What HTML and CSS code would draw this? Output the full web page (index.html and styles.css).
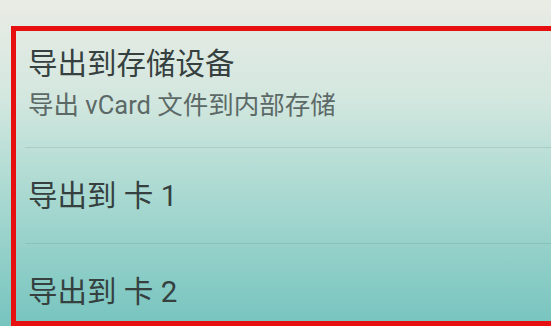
FILE: index.html
```html
<!DOCTYPE html>
<html lang="zh-CN">
<head>
  <meta charset="UTF-8">
  <meta name="viewport" content="width=device-width, initial-scale=1.0">
  <title>导出联系人</title>
  <link rel="stylesheet" href="styles.css">
</head>
<body>
  <div class="frame">
    <ul class="export-list">
      <li class="export-item first">
        <div class="item-title">导出到存储设备</div>
        <div class="item-summary">导出 vCard 文件到内部存储</div>
      </li>
      <li class="export-item">
        <div class="item-title">导出到 卡 1</div>
      </li>
      <li class="export-item">
        <div class="item-title">导出到 卡 2</div>
      </li>
    </ul>
  </div>
</body>
</html>
```

FILE: styles.css
```css
html, body {
  margin: 0;
  height: 100%;
}

body {
  background: linear-gradient(to bottom, #e9ece5 0%, #d3e7df 30%, #a9d9d1 60%, #77c4bf 100%);
  font-family: Roboto, "Noto Sans CJK SC", sans-serif;
  overflow: hidden;
  padding-top: 26px;
  box-sizing: border-box;
}

/* red highlight box, cut off by the right edge */
.frame {
  margin-left: 11px;
  height: 300px;
  box-sizing: border-box;
  border: 5px solid #e5100f;
  border-right: 0;
  overflow: hidden;
}

.export-list {
  list-style: none;
  margin: 0;
  padding: 0;
}

.export-item {
  margin-left: 9px;
  padding-left: 3px;
  height: 95px;
  border-bottom: 1px solid rgba(60, 120, 115, 0.18);
  display: flex;
  flex-direction: column;
  justify-content: center;
}

.export-item.first {
  height: 117px;
  justify-content: flex-start;
  padding-top: 14px;
  box-sizing: border-box;
}

.item-title {
  font-size: 29.5px;
  line-height: 38px;
  color: #35403f;
}

.item-summary {
  margin-top: 5px;
  font-size: 25.5px;
  line-height: 34px;
  color: #5c6967;
}
```
